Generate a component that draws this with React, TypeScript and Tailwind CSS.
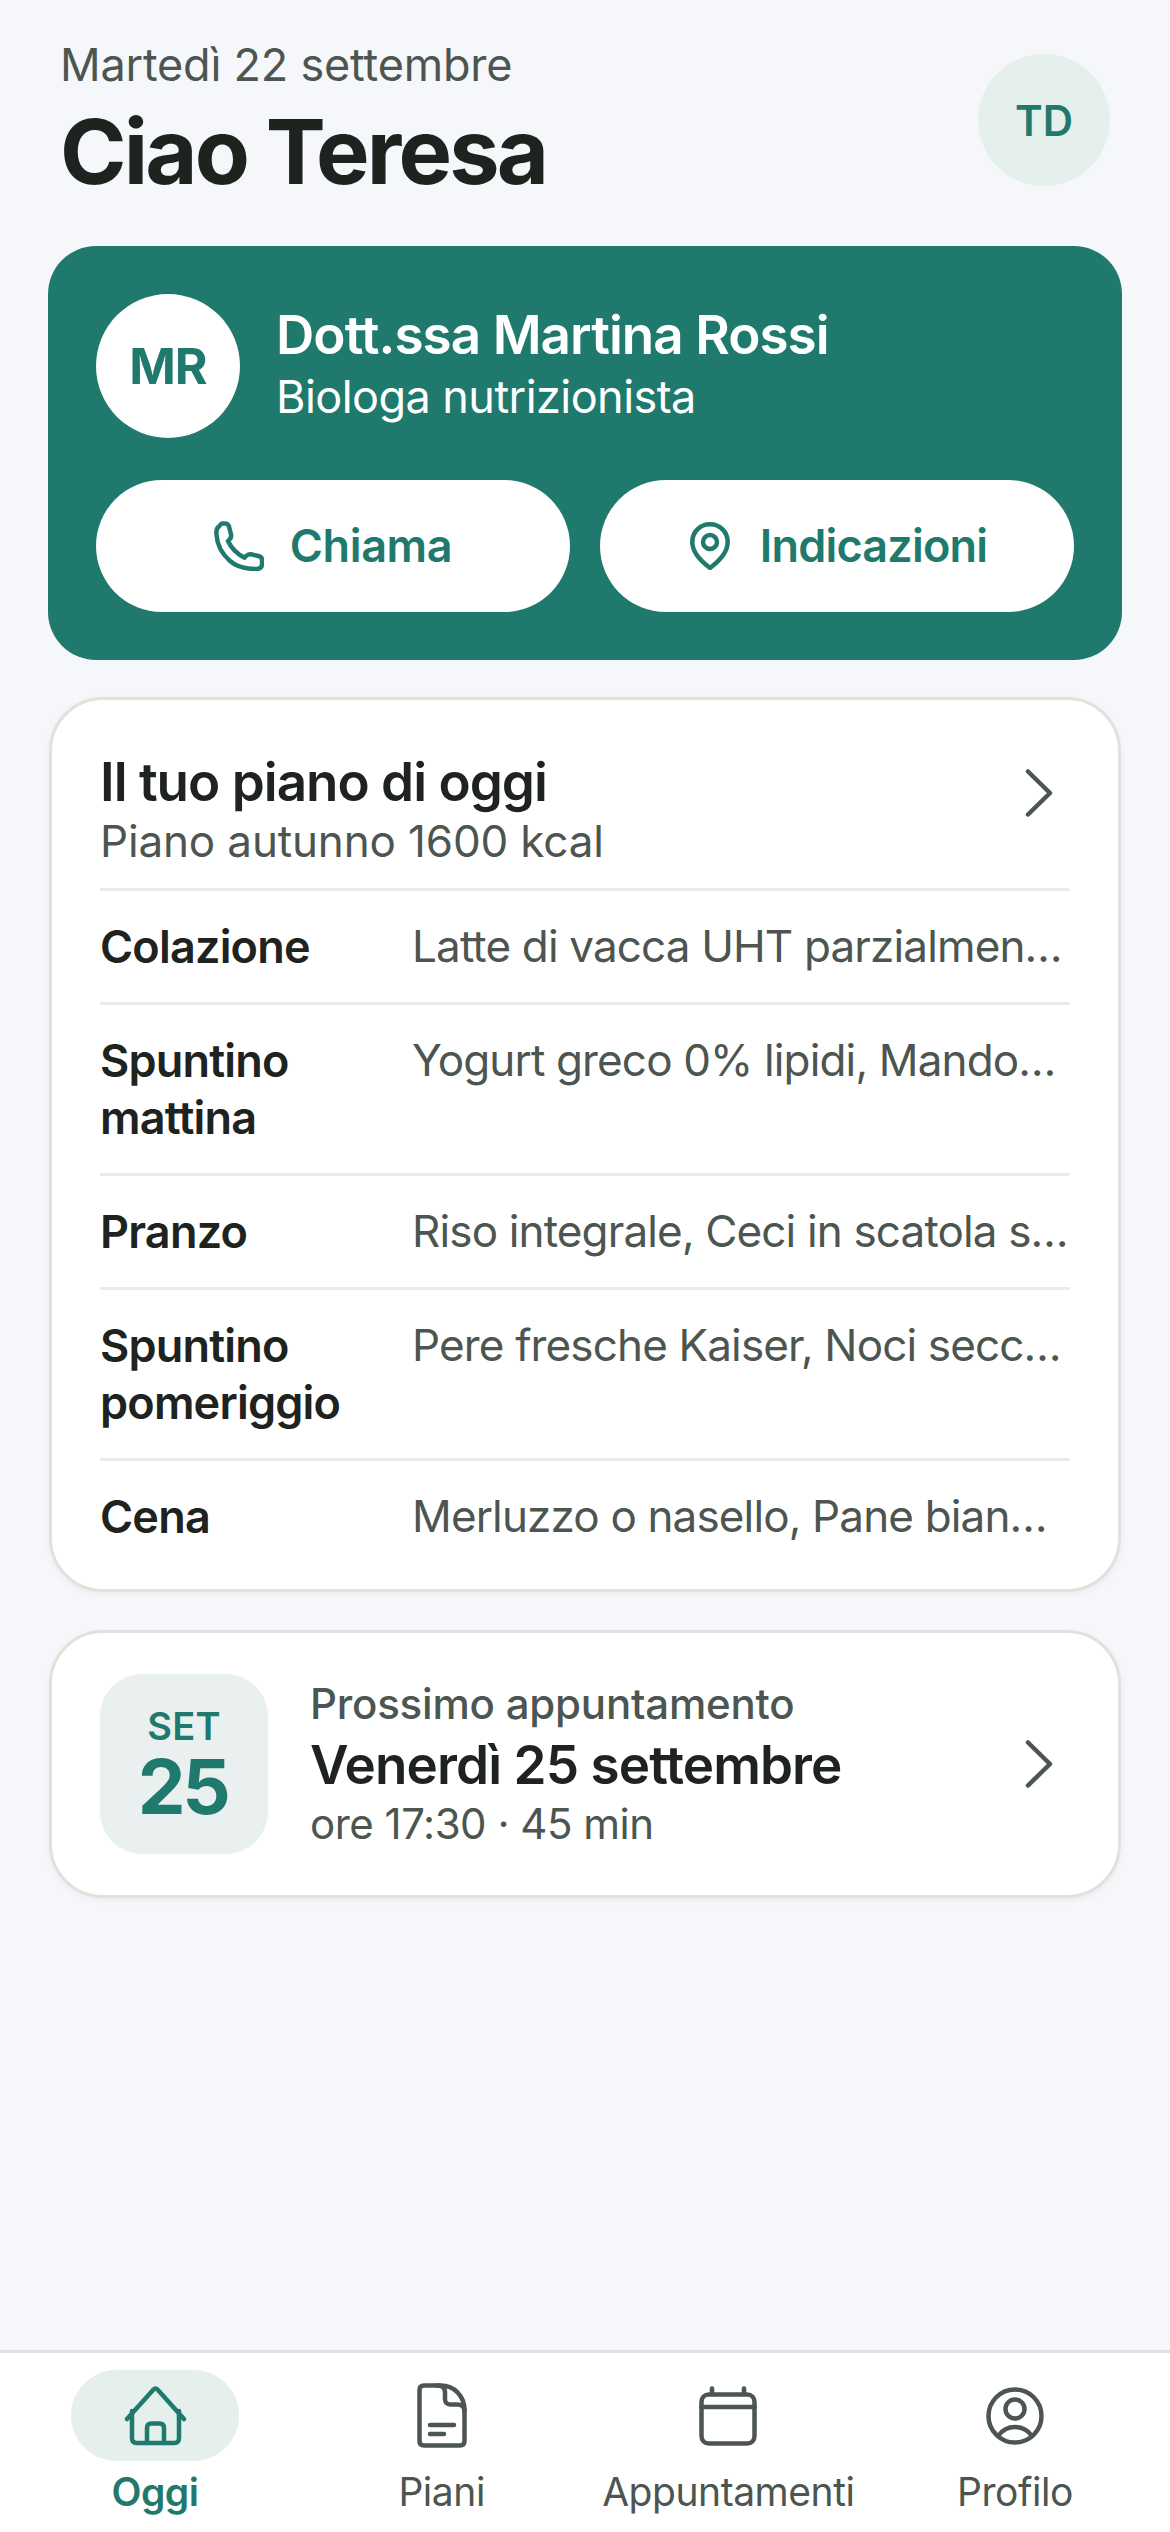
const GREEN = "#1f7a6d";

function Chevron() {
  return (
    <svg width="30" height="48" viewBox="0 0 30 48" fill="none" stroke="#4c5550" strokeWidth="4.5" strokeLinecap="round" strokeLinejoin="round" className="shrink-0">
      <path d="M4 2.5 L26 24 L4 45.5" />
    </svg>
  );
}

function Phone() {
  return (
    <svg width="50" height="50" viewBox="0 0 50 50" fill="none" stroke={GREEN} strokeWidth="4.5" strokeLinecap="round" strokeLinejoin="round">
      <path d="M5 5.5 C3 6.5 2.2 9 2.4 13 C3 24 8 33 16 40 C23 46 31 48 42 48 C46 48 48 46 48 43 L48 39 C48 37 46.5 35.5 44.5 35 L37 33.3 C35 32.8 33.5 33.5 32 35 L30.5 36.6 C24 34 17 27 14 20 L15.5 18.5 C17 17 17.5 15.5 17 13.5 L15 5.5 C14.4 3.5 13 2.4 11 2.4 L8 2.4 C6.8 2.4 5.8 4.8 5 5.5 Z" />
    </svg>
  );
}

function Pin() {
  return (
    <svg width="40" height="48" viewBox="0 0 40 48" fill="none" stroke={GREEN} strokeWidth="4.5" strokeLinecap="round" strokeLinejoin="round">
      <path d="M20 46 C19 45 2.3 34 2.3 20 C2.3 10 10 2.3 20 2.3 C30 2.3 37.7 10 37.7 20 C37.7 34 21 45 20 46 Z" />
      <circle cx="20" cy="20" r="7" />
    </svg>
  );
}

function HomeIcon() {
  return (
    <svg width="63" height="60" viewBox="0 0 63 60" fill="none" stroke={GREEN} strokeWidth="4.5" strokeLinecap="round" strokeLinejoin="round">
      <path d="M3 33 L29.5 3.5 C30.7 2.2 32.3 2.2 33.5 3.5 L60 33" />
      <path d="M8 25 L8 52 C8 55.5 9.5 57 12.5 57 L50.5 57 C53.5 57 55 55.5 55 52 L55 25" />
      <path d="M23 57 L23 42 C23 39 24.5 37.5 27.5 37.5 L35.5 37.5 C38.5 37.5 40 39 40 42 L40 57" />
    </svg>
  );
}

function FileIcon() {
  return (
    <svg width="50" height="65" viewBox="0 0 50 65" fill="none" stroke="#4c5550" strokeWidth="4.5" strokeLinecap="round" strokeLinejoin="round">
      <path d="M7 2.5 L24 2.5 C37 2.5 47.5 13 47.5 27 L47.5 58 C47.5 61 46 62.5 43 62.5 L7 62.5 C4 62.5 2.5 61 2.5 58 L2.5 7 C2.5 4 4 2.5 7 2.5 Z" />
      <path d="M20 2.5 C25 2.5 28 5 28 9 L28 16 C28 19.5 30 21.5 33 21.5 L40 21.5 C44 21.5 47.5 24 47.5 28" />
      <path d="M13 42 L37 42" />
      <path d="M13 51 L27 51" />
    </svg>
  );
}

function CalendarIcon() {
  return (
    <svg width="58" height="60" viewBox="0 0 58 60" fill="none" stroke="#4c5550" strokeWidth="4.5" strokeLinecap="round" strokeLinejoin="round">
      <path d="M10 8.5 L48 8.5 C52.5 8.5 55.5 11.5 55.5 16 L55.5 50 C55.5 54.5 52.5 57.5 48 57.5 L10 57.5 C5.5 57.5 2.5 54.5 2.5 50 L2.5 16 C2.5 11.5 5.5 8.5 10 8.5 Z" />
      <path d="M2.5 21 L55.5 21" />
      <path d="M13 2.5 L13 8" />
      <path d="M45 2.5 L45 8" />
    </svg>
  );
}

function ProfileIcon() {
  return (
    <svg width="58" height="60" viewBox="0 0 58 60" fill="none" stroke="#4c5550" strokeWidth="4.5" strokeLinecap="round" strokeLinejoin="round">
      <circle cx="29" cy="30" r="26.5" />
      <circle cx="29" cy="23" r="9.5" />
      <path d="M12 50 C17 43 23 41 29 41 C35 41 41 43 46 50" />
    </svg>
  );
}

const meals: [string, string][] = [
  ["Colazione", "Latte di vacca UHT parzialmente scremato, Fette biscottate"],
  ["Spuntino mattina", "Yogurt greco 0% lipidi, Mandorle dolci secche"],
  ["Pranzo", "Riso integrale, Ceci in scatola scolati, Zucchine"],
  ["Spuntino pomeriggio", "Pere fresche Kaiser, Noci secche sgusciate"],
  ["Cena", "Merluzzo o nasello, Pane bianco, Spinaci freschi"],
];

function NavItem({ label, icon, active }: { label: string; icon: React.ReactNode; active?: boolean }) {
  return (
    <div className="flex flex-col items-center w-[286px]">
      <div className={`flex items-center justify-center w-[168px] h-[91px] rounded-full ${active ? "bg-[#e5efec]" : ""}`}>{icon}</div>
      <div className={`mt-[6px] text-[39px] leading-[50px] tracking-[-0.45px] whitespace-nowrap ${active ? "font-semibold text-[#1f7a6d]" : "font-normal text-[#4c5550]"}`}>{label}</div>
    </div>
  );
}

export default function App() {
  return (
    <div className="min-h-screen w-[1170px] flex flex-col bg-[#f5f7fb] font-['Inter','Liberation_Sans',sans-serif]">
      <header className="flex justify-between items-start px-[60px] pt-[39px]">
        <div>
          <div className="text-[45px] leading-[52px] text-[#4c5550] tracking-[-0.2px]">Martedì 22 settembre</div>
          <h1 className="mt-[13px] text-[90px] leading-[96px] font-bold text-[#1e2320] tracking-[-2.8px]">Ciao Teresa</h1>
        </div>
        <div className="mt-[15px] w-[132px] h-[132px] rounded-full bg-[#e5efec] flex items-center justify-center text-[42px] font-semibold text-[#1f7a6d]">TD</div>
      </header>

      <section className="mx-[48px] mt-[46px] h-[414px] rounded-[48px] bg-[#1f7a6d] p-[48px]">
        <div className="flex items-center gap-[36px]">
          <div className="w-[144px] h-[144px] rounded-full bg-white flex items-center justify-center text-[50px] font-bold text-[#1f7a6d] tracking-[-1px]">MR</div>
          <div className="text-white">
            <div className="-mt-[5px] text-[53px] leading-[62px] font-semibold tracking-[-0.95px]">Dott.ssa Martina Rossi</div>
            <div className="mt-[5px] text-[45px] leading-[52px] tracking-[-0.55px]">Biologa nutrizionista</div>
          </div>
        </div>
        <div className="mt-[42px] grid grid-cols-2 gap-[30px]">
          <button className="h-[132px] rounded-full bg-white flex items-center justify-center gap-[26px] text-[45px] font-semibold text-[#1f7a6d] tracking-[-0.4px]">
            <Phone />
            Chiama
          </button>
          <button className="h-[132px] rounded-full bg-white flex items-center justify-center gap-[30px] pl-[3px] text-[45px] font-semibold text-[#1f7a6d] tracking-[-0.8px]">
            <Pin />
            Indicazioni
          </button>
        </div>
      </section>

      <section className="mx-[49px] mt-[37px] rounded-[54px] bg-white border-[3px] border-[#e3e1dc] shadow-[0_2px_6px_rgba(0,0,0,0.05)] px-[48px] pb-[17px]">
        <div className="flex justify-between items-start pt-[52px] pb-[22px] border-b-[3px] border-[#eceae6]">
          <div>
            <div className="text-[53px] leading-[60px] font-semibold text-[#1e2320] tracking-[-1px]">Il tuo piano di oggi</div>
            <div className="mt-[4px] text-[44px] leading-[50px] text-[#4c5550] tracking-[-0.15px]">Piano autunno 1600 kcal</div>
          </div>
          <div className="mr-[16px] mt-[17px]"><Chevron /></div>
        </div>
        {meals.map(([label, value], i) => (
          <div key={i} className={`flex py-[27px] ${i < meals.length - 1 ? "border-b-[3px] border-[#eceae6]" : ""}`}>
            <div className="w-[312px] shrink-0 pr-[40px] text-[45px] leading-[57px] font-semibold text-[#1e2320] tracking-[-0.8px]">{label}</div>
            <div className="flex-1 min-w-0 truncate text-[44px] leading-[57px] text-[#4c5550] tracking-[-0.85px]">{value}</div>
          </div>
        ))}
      </section>

      <section className="mx-[49px] mt-[38px] h-[268px] rounded-[54px] bg-white border-[3px] border-[#e3e1dc] shadow-[0_2px_6px_rgba(0,0,0,0.05)] pl-[48px] pr-[64px] flex items-center">
        <div className="w-[168px] h-[180px] rounded-[42px] bg-[#e9f0ef] flex flex-col items-center justify-center text-[#1f7a6d]">
          <div className="text-[38px] leading-[44px] font-semibold tracking-[0.3px]">SET</div>
          <div className="text-[76px] leading-[76px] font-bold tracking-[-3.5px] pr-[3px]">25</div>
        </div>
        <div className="ml-[42px] flex-1">
          <div className="text-[42px] leading-[50px] font-medium text-[#4c5550] tracking-[-0.2px]">Prossimo appuntamento</div>
          <div className="mt-[6px] text-[53px] leading-[60px] font-semibold text-[#1e2320] tracking-[-0.9px]">Venerdì 25 settembre</div>
          <div className="mt-[4px] text-[42px] leading-[50px] text-[#4c5550] tracking-[-0.5px]">ore 17:30 · 45 min</div>
        </div>
        <Chevron />
      </section>

      <div className="flex-1" />

      <nav className="h-[182px] bg-white border-t-[3px] border-[#e3e1dc] pt-[17px] px-[12px] flex justify-between">
        <NavItem label="Oggi" icon={<HomeIcon />} active />
        <NavItem label="Piani" icon={<FileIcon />} />
        <NavItem label="Appuntamenti" icon={<CalendarIcon />} />
        <NavItem label="Profilo" icon={<ProfileIcon />} />
      </nav>
    </div>
  );
}
